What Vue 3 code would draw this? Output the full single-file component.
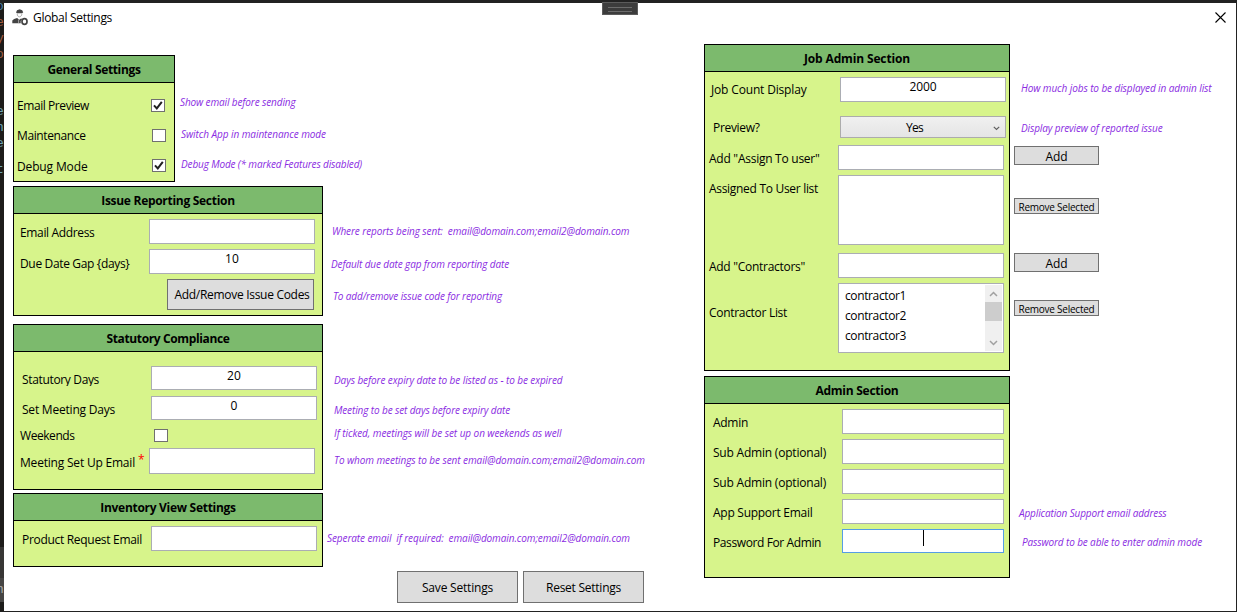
<script setup>
// Adjusts tracking so that a caption takes up the given width in pixels.
const vFit = {
  mounted(el, { value }) {
    if (!value) return
    const natural = el.getBoundingClientRect().width
    el.style.letterSpacing = (value - natural) / el.textContent.length + 'px'
  }
}

const left = [
  {
    id: 'general', title: 'General Settings', tw: 93,
    rows: [
      { id: 'g1', label: 'Email Preview', lw: 72, kind: 'check', on: true, hint: 'Show email before sending', hw: 115.5 },
      { id: 'g2', label: 'Maintenance', lw: 68.500, kind: 'check', on: false, hint: 'Switch App in maintenance mode', hw: 145 },
      { id: 'g3', label: 'Debug Mode', lw: 70.500, kind: 'check', on: true, hint: 'Debug Mode (* marked Features disabled)', hw: 181 }
    ]
  },
  {
    id: 'issue', title: 'Issue Reporting Section', tw: 133.5,
    rows: [
      { id: 'i1', label: 'Email Address', lw: 74.500, kind: 'text', hint: 'Where reports being sent:  email@domain.com;email2@domain.com', hw: 297.5 },
      { id: 'i2', label: 'Due Date Gap {days}', lw: 109.500, kind: 'text', value: '10', vw: 14, hint: 'Default due date gap from reporting date', hw: 178 },
      { id: 'i3', label: '', kind: 'button', value: 'Add/Remove Issue Codes', vw: 135, hint: 'To add/remove issue code for reporting', hw: 169 }
    ]
  },
  {
    id: 'statutory', title: 'Statutory Compliance', tw: 123,
    rows: [
      { id: 's1', label: 'Statutory Days', lw: 77, kind: 'text', value: '20', vw: 14, hint: 'Days before expiry date to be listed as - to be expired', hw: 228.5 },
      { id: 's2', label: 'Set Meeting Days', lw: 93, kind: 'text', value: '0', vw: 7, hint: 'Meeting to be set days before expiry date', hw: 176 },
      { id: 's3', label: 'Weekends', lw: 54.500, kind: 'check', on: false, hint: 'If ticked, meetings will be set up on weekends as well', hw: 227.5 },
      { id: 's4', label: 'Meeting Set Up Email', lw: 115, star: true, kind: 'text', hint: 'To whom meetings to be sent email@domain.com;email2@domain.com', hw: 311 }
    ]
  },
  {
    id: 'inventory', title: 'Inventory View Settings', tw: 135.5,
    rows: [
      { id: 'v1', label: 'Product Request Email', lw: 120, kind: 'text', hint: 'Seperate email  if required:  email@domain.com;email2@domain.com', hw: 303 }
    ]
  }
]

const right = [
  {
    id: 'job', title: 'Job Admin Section', tw: 106,
    rows: [
      { id: 'j1', label: 'Job Count Display', lw: 95.500, kind: 'text', value: '2000', vw: 27, hint: 'How much jobs to be displayed in admin list', hw: 190.5 },
      { id: 'j2', label: 'Preview?', lw: 46.500, kind: 'select', value: 'Yes', vw: 17, hint: 'Display preview of reported issue', hw: 141.5 },
      { id: 'j3', label: 'Add "Assign To user"', lw: 110.500, kind: 'text', action: 'Add', aw: 22 },
      { id: 'j4', label: 'Assigned To User list', lw: 109, kind: 'list', items: [], action: 'Remove Selected', aw: 76, small: true },
      { id: 'j5', label: 'Add "Contractors"', lw: 96, kind: 'text', action: 'Add', aw: 22 },
      { id: 'j6', label: 'Contractor List', lw: 78, kind: 'list', items: ['contractor1', 'contractor2', 'contractor3'], action: 'Remove Selected', aw: 76, small: true }
    ]
  },
  {
    id: 'admin', title: 'Admin Section', tw: 83,
    rows: [
      { id: 'a1', label: 'Admin', lw: 35, kind: 'text' },
      { id: 'a2', label: 'Sub Admin (optional)', lw: 113, kind: 'text' },
      { id: 'a3', label: 'Sub Admin (optional)', lw: 113, kind: 'text' },
      { id: 'a4', label: 'App Support Email', lw: 99.500, kind: 'text', hint: 'Application Support email address', hw: 147.5 },
      { id: 'a5', label: 'Password For Admin', lw: 108, kind: 'text', focus: true, hint: 'Password to be able to enter admin mode', hw: 180 }
    ]
  }
]

const columns = [{ id: 'left', panels: left }, { id: 'right', panels: right }]
const code = ['o', 'e', 'y', 'o', 'e', 'n', 'e', 't', 'n']
</script>

<template>
  <div class="desktop">
    <div class="gutter">
      <span v-for="(c, i) in code" :key="i" :class="'c' + i">{{ c }}</span>
    </div>
    <div class="window">
      <header class="titlebar">
        <svg class="logo" width="17" height="17" viewBox="0 0 17 17">
          <path d="M4 3.600 5 1.200 7.700.3l2.500 1 1 2.200-1.300.7H5.200z" fill="#444" />
          <path d="M5.200 4.500c0 2 .9 3.400 2.200 3.400S9.900 6.500 9.900 4.500" fill="none" stroke="#999" stroke-width=".8" />
          <path d="M.3 14.200v-2.700l1.800-1.500 3-.9 2.200 1.700L9 9.400l1.300.6-1.600 2v2.200z" fill="#444" />
          <path d="M6.600 10.500v3.500" stroke="#ccc" stroke-width=".7" />
          <ellipse cx="12.500" cy="12.500" rx="2.500" ry="2.900" fill="#fff" stroke="#444" stroke-width="1.700" />
        </svg>
        <span class="title" v-fit="79">Global Settings</span>
        <svg class="close" width="11" height="11" viewBox="0 0 11 11">
          <path d="M.5.5l10 10M10.500.5l-10 10" stroke="#000" stroke-width="1.100" />
        </svg>
      </header>

      <main class="body">
        <div v-for="col in columns" :key="col.id" class="column" :class="col.id">
          <section v-for="p in col.panels" :key="p.id" class="panel" :class="p.id">
            <h2><span v-fit="p.tw">{{ p.title }}</span></h2>
            <div v-for="r in p.rows" :key="r.id" class="row" :class="r.id">
              <div class="label"><span v-fit="r.lw">{{ r.label }}</span><sup v-if="r.star">*</sup></div>

              <div v-if="r.kind === 'check'" class="field check">
                <svg v-if="r.on" width="12" height="11" viewBox="0 0 12 11">
                  <path d="M2 5.300 4.800 8.400 9.800 1.800" fill="none" stroke="#212121" stroke-width="2" />
                </svg>
              </div>
              <div v-else-if="r.kind === 'text'" class="field input" :class="{ focus: r.focus }">
                <span v-if="r.value" v-fit="r.vw">{{ r.value }}</span>
                <i v-if="r.focus" class="caret"></i>
              </div>
              <button v-else-if="r.kind === 'button'" class="field btn"><span v-fit="r.vw">{{ r.value }}</span></button>
              <div v-else-if="r.kind === 'select'" class="field select">
                <span v-fit="r.vw">{{ r.value }}</span>
                <svg width="7" height="5" viewBox="0 0 7 5"><path d="M.8.8 3.500 3.500 6.200.8" fill="none" stroke="#606060" stroke-width="1.200" /></svg>
              </div>
              <div v-else class="field list">
                <ul v-if="r.items.length">
                  <li v-for="it in r.items" :key="it"><span v-fit="61">{{ it }}</span></li>
                </ul>
                <div v-if="r.items.length" class="scroll">
                  <svg width="9" height="6" viewBox="0 0 9 6"><path d="M1 5 4.500 1.500 8 5" fill="none" stroke="#a0a0a0" stroke-width="1.500" /></svg>
                  <div class="thumb"></div>
                  <svg width="9" height="6" viewBox="0 0 9 6"><path d="M1 1 4.500 4.500 8 1" fill="none" stroke="#a0a0a0" stroke-width="1.500" /></svg>
                </div>
              </div>

              <em v-if="r.hint" class="hint"><span v-fit="r.hw">{{ r.hint }}</span></em>
              <button v-if="r.action" class="btn action" :class="{ small: r.small }"><span v-fit="r.aw">{{ r.action }}</span></button>
            </div>
          </section>
          <footer v-if="col.id === 'left'" class="buttons">
            <button class="btn"><span v-fit="71">Save Settings</span></button>
            <button class="btn"><span v-fit="75">Reset Settings</span></button>
          </footer>
        </div>
      </main>
    </div>
    <div class="grip"></div>
  </div>
</template>

<style>
html, body { margin: 0; background: #1d1c1b; overflow: hidden; }
</style>

<style scoped>
* { box-sizing: border-box; }
.desktop {
  position: relative;
  width: 1237px;
  height: 612px;
  display: flex;
  background: #222;
  padding: 3px 1px 1px 0;
  overflow: hidden;
  font: 12px/18px "Open Sans", "Noto Sans", sans-serif;
  color: #000;
}
.desktop span { display: inline-block; white-space: pre; }
.gutter {
  flex: none;
  width: 4px;
  height: 608px;
  overflow: hidden;
  background: linear-gradient(#1d1c1a 544px, #373635 544px, #373635 575px, #464544 575px, #464544 599px, #1d1c1a 599px);
  display: flex;
  flex-direction: column;
  font: 13px/16px "Liberation Mono", monospace;
  color: #6fa5b5;
}
.gutter span { margin-left: -4px; height: 16px; flex: none; }
.gutter .c0 { margin-top: -4px; color: #4a82a8; }
.gutter .c1, .gutter .c2, .gutter .c3 { color: #a35e42; }
.gutter .c4 { margin-top: 41px; }
.gutter .c7 { margin-top: 10px; }
.gutter .c8 { margin-top: 404px; color: #aaa; }
.window { flex: none; width: 1232px; height: 608px; background: #fff; }
.grip {
  position: absolute;
  left: 602px;
  top: 2px;
  width: 36px;
  height: 13px;
  border: 1px solid #5b5b5b;
  background: #3c3c3c;
  padding: 4px 5px;
}
.grip::before { content: ""; display: block; height: 3px; border: solid #6c6c6c; border-width: 1px 0; }
.titlebar { height: 30px; display: flex; align-items: flex-start; padding: 6px 10px 0 8px; }
.logo { flex: none; }
.title { margin: 0 0 0 4px; }
.close { margin: 3px 0 0 auto; }
.body { display: flex; align-items: flex-start; }
.column { flex: none; display: flex; flex-direction: column; align-items: flex-start; }
.left { width: 691px; margin: 22px 0 0 9px; }
.right { margin-top: 11px; }

.panel { width: 310px; border: 1px solid #000; background: #d7f48b; }
.panel h2 {
  margin: 0;
  height: 27px;
  padding-top: 5px;
  border-bottom: 1px solid #000;
  background: #7cba6d;
  text-align: center;
  font-size: 12px;
  line-height: 18px;
  font-weight: 700;
}
.general { width: 162px; height: 127px; }
.issue { height: 130px; margin-top: 4px; }
.statutory { height: 166px; margin-top: 8px; }
.inventory { height: 74px; margin-top: 3px; }
.job { width: 306px; height: 327px; }
.admin { width: 306px; height: 202px; margin-top: 5px; }

.row {
  width: max-content;
  height: var(--h, 30px);
  display: grid;
  grid-template-columns: var(--f) var(--w) max-content;
  align-items: start;
}
.label { display: flex; height: 18px; margin-top: var(--lt, 10px); padding-left: var(--lx, 6px); }
.label sup { font-size: 12px; line-height: 11px; color: #f00; margin: 0 0 0 3px; vertical-align: top; }
.field { margin-top: var(--ft, 5px); height: var(--fh, 25px); }
.hint {
  margin: var(--ht, 10px) 0 0 var(--hg, 17px);
  font-size: 10px;
  line-height: 14px;
  height: 14px;
  color: #8a2be2;
  display: flex;
}
.input { border: 1px solid #abadb3; background: #fff; text-align: center; line-height: 18px; }
.focus { border-color: #569de5; }
.caret { display: block; width: 1px; height: 16px; margin: 0 auto; background: #000; }
.check { border: 1px solid #707070; background: #fff; --fh: 13px; }
.check svg { display: block; }
.btn {
  border: 1px solid #707070;
  background: #ddd;
  padding: 0;
  font: inherit;
  color: #000;
  display: flex;
  align-items: flex-start;
  justify-content: center;
}
.select {
  border: 1px solid #acacac;
  background: linear-gradient(#f0f0f0, #e5e5e5);
  display: flex;
  align-items: flex-start;
  padding: 2px 5px 0 65px;
}
.select svg { margin: 7px 0 0 auto; }
.list { border: 1px solid #abadb3; background: #fff; --fh: 70px; display: flex; justify-content: space-between; padding: 1px; }
.list ul { list-style: none; margin: 0; padding: 2px 0 0 5px; }
.list li { height: 20px; }
.scroll { width: 17px; background: #f0f0f0; display: flex; flex-direction: column; align-items: center; padding: 6px 0 5px; }
.thumb { width: 17px; height: 19px; background: #cdcdcd; margin: 5px 0 auto; }
.action { width: 85px; height: 19px; margin: var(--bt, 5px) 0 0 10px; padding-top: 1px; }
.action.small { height: 16px; font-size: 10px; line-height: 14px; padding-top: 1px; }

.general .row { --f: 138px; --w: 14px; --hg: 15px; --lx: 3px; --lt: 14px; --ft: 16px; --ht: 14px; }
.general .g1 { --f: 137px; --ht: 12px; }
.general .g3 { --h: 38px; --lt: 15px; }

.issue .row { --f: 135px; --w: 166px; }
.issue .i2 { --lt: 11px; --ht: 13px; --hg: 16px; }
.issue .i3 { --h: 41px; --f: 153px; --w: 147px; --fh: 31px; --ht: 15px; --hg: 19px; }
.i3 .btn { padding: 6px 0 0 3px; }

.statutory .row { --f: 137px; --w: 166px; --fh: 24px; }
.statutory .s1 { --h: 37px; --lx: 8px; --lt: 19px; --ft: 14px; --ht: 21px; }
.s1 .label { height: 15px; overflow: hidden; }
.statutory .s2 { --h: 36px; --lx: 8px; --lt: 12px; --ft: 7px; --ht: 14px; }
.statutory .s3 { --h: 20px; --f: 140px; --w: 14px; --lt: 2px; --ft: 4px; --ht: 1px; --hg: 166px; }
.statutory .s4 { --h: 44px; --f: 135px; --fh: 26px; --lt: 9px; --ft: 3px; --ht: 8px; --hg: 19px; }
.statutory .s3 .check { --fh: 13px; }

.inventory .row { --f: 137px; --w: 166px; --lx: 8px; --h: 45px; --hg: 10px; }

.job .row { --f: 133px; --w: 166px; --lx: 4px; }
.job .j1 { --h: 40px; --f: 135px; --lx: 6px; --lt: 9px; --ht: 9px; --hg: 15px; }
.job .j2 { --h: 29px; --f: 135px; --lx: 8px; --lt: 7px; --ft: 4px; --fh: 22px; --ht: 9px; --hg: 15px; }
.job .j3 { --h: 29px; --lt: 9px; --ft: 4px; }
.job .j4 { --h: 78px; --bt: 28px; }
.j3 .label, .j4 .label { height: 16px; overflow: hidden; }
.job .j6 { --h: 92px; --lt: 26px; --bt: 22px; }

.admin .row { --f: 137px; --w: 162px; --lx: 8px; }
.admin .a4 { --ht: 12px; --hg: 15px; }
.admin .a5 { --h: 53px; --fh: 24px; --ht: 11px; --hg: 18px; }

.buttons { display: flex; gap: 5px; margin: 4px 0 0 384px; }
.buttons .btn { width: 121px; height: 32px; padding-top: 7px; }
</style>
